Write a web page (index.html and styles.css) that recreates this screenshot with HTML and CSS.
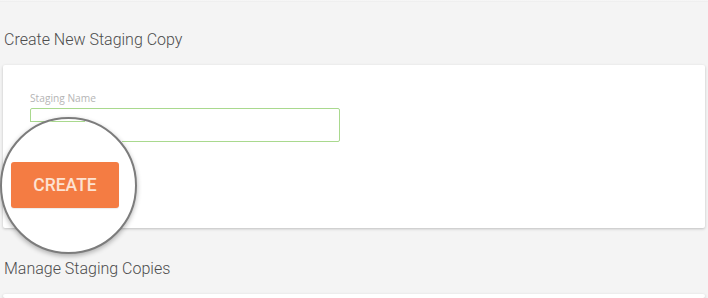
FILE: index.html
```html
<!DOCTYPE html>
<html lang="en">
<head>
    <meta charset="UTF-8">
    <meta name="viewport" content="width=device-width, initial-scale=1.0">
    <title>Staging</title>
    <link rel="stylesheet" href="styles.css">
</head>
<body>
    <div class="page">
        <div class="top-edge"></div>

        <h2 class="section-title first">Create New Staging Copy</h2>
        <div class="card create-card">
            <label class="field-label" for="stagingName">Staging Name</label>
            <input class="field-input" type="text" id="stagingName">
        </div>

        <h2 class="section-title">Manage Staging Copies</h2>
        <div class="card list-card"></div>

        <!-- magnifier over the create button -->
        <div class="lens-patch"></div>
        <div class="lens">
            <div class="lens-line"></div>
            <button class="create-button">CREATE</button>
        </div>
    </div>
</body>
</html>
```

FILE: styles.css
```css
body {
    margin: 0;
    background-color: #f4f4f4;
    font-family: Roboto, "Liberation Sans", sans-serif;
    overflow: hidden;
}
.page {
    position: relative;
    height: 298px;
    overflow: hidden;
}
.top-edge {
    height: 2px;
    background: linear-gradient(#f9f9f9, #ececec);
}
.section-title {
    margin: 31px 0 15px;
    padding: 0 4px;
    font-size: 16px;
    line-height: 20px;
    font-weight: 300;
    color: #4d4d4d;
}
.section-title.first {
    margin-top: 28px;
}
.card {
    margin: 0 3px;
    background: white;
    border-radius: 2px;
    box-shadow: 0 1px 3px rgba(0, 0, 0, 0.22);
    box-sizing: border-box;
}
.create-card {
    height: 163px;
    padding: 26px 27px;
    display: flex;
    flex-direction: column;
    align-items: flex-start;
}
.field-label {
    font-family: "Open Sans", sans-serif;
    font-size: 10.2px;
    line-height: 14px;
    color: #b5b5b5;
    margin-bottom: 3px;
}
.field-input {
    width: 310px;
    height: 34px;
    box-sizing: border-box;
    border: 1px solid #a9d98e;
    border-radius: 2px;
    outline: none;
    margin: 0;
}
.list-card {
    height: 4px;
}
.lens-patch {
    position: absolute;
    left: 29px;
    top: 121px;
    width: 93px;
    height: 23px;
    background: white;
}
.lens-patch::before {
    content: "";
    position: absolute;
    left: 1px;
    top: 0;
    width: 56px;
    height: 1px;
    background: #a9d98e;
}
.lens {
    position: absolute;
    left: 0;
    top: 117px;
    width: 137px;
    height: 137px;
    box-sizing: border-box;
    border: 2px solid #7c7c7c;
    border-radius: 50%;
    background: white;
    overflow: hidden;
    box-shadow: 0 2px 5px rgba(0, 0, 0, 0.3);
}
.lens-line {
    position: absolute;
    left: 0;
    top: 2px;
    width: 83px;
    height: 1px;
    background: #a9d98e;
}
.create-button {
    position: absolute;
    left: 9px;
    top: 43px;
    width: 108px;
    height: 46px;
    padding: 0;
    background-color: #f47c43;
    border: none;
    border-radius: 3px;
    color: #fde2d2;
    font-family: Roboto, sans-serif;
    font-weight: 500;
    font-size: 17.5px;
    text-align: center;
    box-shadow: 0 1px 1px rgba(0, 0, 0, 0.08);
    cursor: pointer;
}
```
